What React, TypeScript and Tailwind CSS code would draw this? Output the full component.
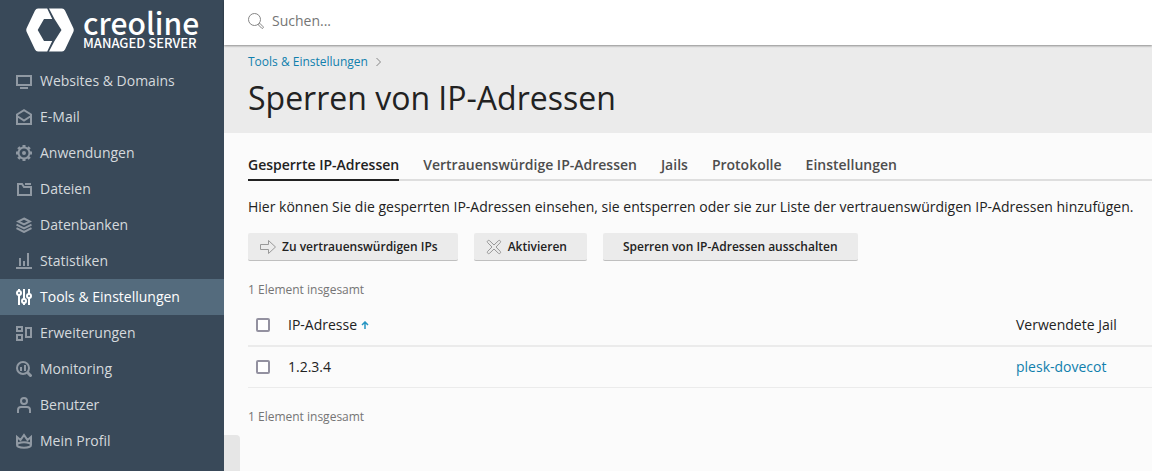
import React, { useState } from 'react';

interface NavItem {
    label: string;
    icon: React.ReactNode;
}

const navItems: NavItem[] = [
    {
        label: 'Websites & Domains',
        icon: <path d="M1 3h14v9H1zM4 15h8" />,
    },
    {
        label: 'E-Mail',
        icon: <path d="M1 5.500 8 1.200l7 4.300V15H1zM1 7l7 4.500L15 7" />,
    },
    {
        label: 'Anwendungen',
        icon: (
            <>
                <circle cx="8" cy="8" r="5.500" />
                <circle cx="8" cy="8" r="1" />
                <path
                    d="M8 0v3M8 13v3M0 8h3M13 8h3M2.300 2.300l2 2M11.700 11.700l2 2M2.300 13.700l2-2M11.700 4.300l2-2"
                    strokeWidth="3"
                />
            </>
        ),
    },
    {
        label: 'Dateien',
        icon: <path d="M2 3h4l2 3h7v8H2zM9 3h6" />,
    },
    {
        label: 'Datenbanken',
        icon: <path d="M8 1.500 14 4.500 8 7.500 2 4.500zM.5 7.700 8 11.500l7.500-3.800M.5 11.200 8 15l7.500-3.800" />,
    },
    {
        label: 'Statistiken',
        icon: <path d="M0 15h16M4 5v8M8 8v5M12 0v13" />,
    },
    {
        label: 'Tools & Einstellungen',
        icon: (
            <>
                <circle cx="3" cy="4" r="2" />
                <circle cx="8" cy="12" r="2" />
                <circle cx="13" cy="7" r="2" />
                <path d="M3 0v2M3 6v10M8 0v10M8 14v2M13 0v5M13 9v7" />
            </>
        ),
    },
    {
        label: 'Erweiterungen',
        icon: <path d="M1 2h5v4H1zM1 10h5v5H1zM10 3h5v9h-5z" />,
    },
    {
        label: 'Monitoring',
        icon: (
            <>
                <circle cx="7" cy="7" r="6" />
                <path d="M5 6v4M9 4v6" />
                <path d="m11.500 11.500 4 4" strokeWidth="3" />
            </>
        ),
    },
    {
        label: 'Benutzer',
        icon: (
            <>
                <circle cx="8" cy="4" r="3" />
                <path d="M2 16v-3q0-3 3-3h6q3 0 3 3v3" />
            </>
        ),
    },
    {
        label: 'Mein Profil',
        icon: (
            <>
                <path d="M1 12V4l3.500 3L8 2l3.500 5L15 4v8" />
                <ellipse cx="8" cy="12" rx="7" ry="2.800" />
            </>
        ),
    },
];

const tabs = [
    'Gesperrte IP-Adressen',
    'Vertrauenswürdige IP-Adressen',
    'Jails',
    'Protokolle',
    'Einstellungen',
];

const bannedIps = [{ ip: '1.2.3.4', jail: 'plesk-dovecot' }];

const Logo = () => (
    <a href="#" className="flex h-[63px] items-start gap-[9px] pl-[26px] pt-2 text-white">
        <svg className="h-11 w-12 shrink-0" viewBox="0 0 48 44" fill="currentColor">
            <path d="M12 .5h9.200l5 10.500H18l-6.300 11L18 33h8.200l-5 10.500H12q-2 0-3-2L.7 24q-.9-2 0-4L9 2.500q1-2 3-2z" />
            <path d="M23 .5h13q2 0 3 2L47.300 20q.9 2 0 4L39 41.500q-1 2-3 2H23L28.500 33 35.500 22l-7-11z" />
        </svg>
        <span className="flex flex-col font-['Noto_Sans_CJK_SC',sans-serif]">
            <span className="text-[30px] leading-[29px] font-medium">creoline</span>
            <span className="text-[13px] leading-[12px] font-medium">MANAGED SERVER</span>
        </span>
    </a>
);

const Sidebar = () => (
    <aside className="w-56 shrink-0 bg-[#394959]">
        <Logo />
        <nav>
            {navItems.map((item) => {
                const active = item.label === 'Tools & Einstellungen';
                return (
                    <a
                        key={item.label}
                        href="#"
                        className={`flex h-9 items-center gap-2 px-4 ${
                            active ? 'bg-[#546b7d] text-white' : 'text-[#d5d9dd]'
                        }`}
                    >
                        <svg
                            className={`size-4 shrink-0 ${active ? 'text-white' : 'text-[#9099a3]'}`}
                            viewBox="0 0 16 16"
                            fill="none"
                            stroke="currentColor"
                            strokeWidth="2"
                        >
                            {item.icon}
                        </svg>
                        {item.label}
                    </a>
                );
            })}
        </nav>
    </aside>
);

interface ActionButtonProps {
    label: string;
    icon?: React.ReactNode;
}

const ActionButton = ({ label, icon }: ActionButtonProps) => (
    <button
        type="button"
        className="flex h-7 items-center gap-1.5 rounded-xs border-b border-[#bfbfbf] bg-[#ebebeb] px-5 text-xs font-semibold"
    >
        {icon && (
            <svg
                className="-ml-2 size-4 shrink-0 text-[#999999]"
                viewBox="0 0 16 16"
                fill="none"
                stroke="currentColor"
            >
                {icon}
            </svg>
        )}
        {label}
    </button>
);

const App = () => {
    const [activeTab, setActiveTab] = useState<string>(tabs[0]);

    return (
        <div className="flex min-h-screen bg-[#fbfbfb] font-['Open_Sans',sans-serif] text-sm text-[#222222]">
            <Sidebar />
            <div className="relative min-w-0 flex-1">
                <header className="relative flex h-[45px] items-center gap-2 bg-white px-6 pb-1 shadow-[0_1px_2px_rgba(0,0,0,0.4)]">
                    <svg
                        className="size-4 shrink-0 text-[#858585]"
                        viewBox="0 0 16 16"
                        fill="none"
                        stroke="currentColor"
                    >
                        <circle cx="6.500" cy="6.500" r="6" />
                        <path d="m10.300 11.800 1.500-1.500 3.400 3.500q.5.700-.2 1.300t-1.300.1z" />
                    </svg>
                    <input
                        type="search"
                        aria-label="Suchen"
                        placeholder="Suchen..."
                        className="w-full bg-transparent outline-none placeholder:text-[#757575]"
                    />
                </header>

                <div className="bg-[#ebebeb] px-6 pt-2 pb-3.5">
                    <div className="flex items-center gap-2 text-xs leading-[18px]">
                        <a href="#" className="text-[#107fad]">
                            Tools &amp; Einstellungen
                        </a>
                        <svg
                            className="h-2 w-1.5 text-[#858585]"
                            viewBox="0 0 6 8"
                            fill="none"
                            stroke="currentColor"
                        >
                            <path d="m.5 0 4 4-4 4" />
                        </svg>
                    </div>
                    <h1 className="pt-1.5 text-[32px] leading-[42px]">Sperren von IP-Adressen</h1>
                </div>

                <main className="pt-5 pl-6">
                    <div className="flex gap-6 border-b-2 border-[#dedede]">
                        {tabs.map((tab) => (
                            <button
                                key={tab}
                                type="button"
                                onClick={() => setActiveTab(tab)}
                                className={`-mb-0.5 border-b-2 pb-0.5 leading-[24px] font-semibold whitespace-nowrap ${
                                    tab === activeTab
                                        ? 'border-[#222222]'
                                        : 'border-transparent text-[#4d4d4d]'
                                }`}
                            >
                                {tab}
                            </button>
                        ))}
                    </div>

                    <p className="py-4">
                        Hier können Sie die gesperrten IP-Adressen einsehen, sie entsperren oder sie
                        zur Liste der vertrauenswürdigen IP-Adressen hinzufügen.
                    </p>

                    <div className="flex gap-4">
                        <ActionButton
                            label="Zu vertrauenswürdigen IPs"
                            icon={<path d="M.5 5.500h8v-4l7 6.500-7 6.500v-4h-8z" />}
                        />
                        <ActionButton
                            label="Aktivieren"
                            icon={
                                <path
                                    d="M1.700 3.700 6 8l-4.300 4.300q-.8 1 0 1.900t2 0L8 10l4.300 4.200q1 .9 1.900 0t0-1.900L10 8l4.200-4.300q.9-1 0-1.900t-1.900 0L8 6 3.700 1.800q-1-.9-2 0t0 1.900z"
                                />
                            }
                        />
                        <ActionButton label="Sperren von IP-Adressen ausschalten" />
                    </div>

                    <p className="pt-5 pb-1.5 text-xs leading-[17px] text-[#757575]">1 Element insgesamt</p>
                    <table className="w-full text-left">
                        <thead>
                            <tr className="h-[42px] border-b-2 border-[#ebebeb]">
                                <th className="w-8 pl-2">
                                    <input
                                        type="checkbox"
                                        aria-label="Alle auswählen"
                                        className="block size-3.5 appearance-none rounded-xs border-2 border-[#9391a0] bg-white checked:bg-[#107fad]"
                                    />
                                </th>
                                <th className="px-2 font-normal">
                                    <button type="button" className="flex items-center gap-1">
                                        IP-Adresse
                                        <svg
                                            className="size-2 text-[#2695c2]"
                                            viewBox="0 0 8 8"
                                            fill="none"
                                            stroke="currentColor"
                                        >
                                            <path d="M4 8V1M1 4l3-3 3 3" strokeWidth="1.500" />
                                        </svg>
                                    </button>
                                </th>
                                <th className="w-36 px-2 font-normal">Verwendete Jail</th>
                            </tr>
                        </thead>
                        <tbody>
                            {bannedIps.map((row) => (
                                <tr key={row.ip} className="h-[41px] border-b border-[#ebebeb]">
                                    <td className="pl-2">
                                        <input
                                            type="checkbox"
                                            aria-label={row.ip}
                                            className="block size-3.5 appearance-none rounded-xs border-2 border-[#9391a0] bg-white checked:bg-[#107fad]"
                                        />
                                    </td>
                                    <td className="px-2">{row.ip}</td>
                                    <td className="px-2">
                                        <a href="#" className="text-[#107fad]">
                                            {row.jail}
                                        </a>
                                    </td>
                                </tr>
                            ))}
                        </tbody>
                    </table>
                    <p className="pt-5 text-xs leading-[17px] text-[#757575]">1 Element insgesamt</p>
                </main>

                <button
                    type="button"
                    aria-label="Seitenleiste einklappen"
                    className="absolute bottom-0 left-0 h-9 w-4 rounded-tr bg-[#e6e6e6]"
                />
            </div>
        </div>
    );
};

export default App;
